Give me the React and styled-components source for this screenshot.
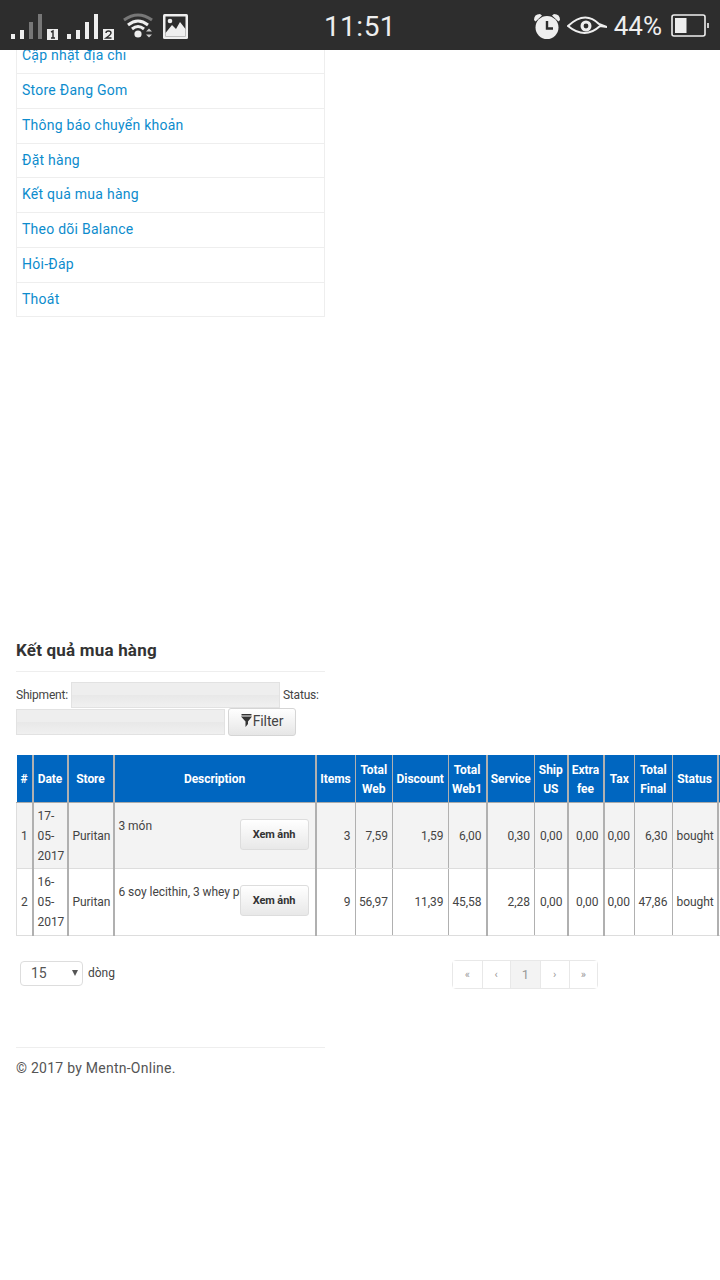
import React from 'react'
import styled, { createGlobalStyle } from 'styled-components'

const GlobalStyle = createGlobalStyle`
  html, body {
    margin: 0;
    padding: 0;
    background: #fff;
  }
  body {
    font-family: Roboto, "Liberation Sans", sans-serif;
    color: #333;
    overflow-x: hidden;
  }
`

const menuItems = [
  'Cập nhật địa chỉ',
  'Store Đang Gom',
  'Thông báo chuyển khoản',
  'Đặt hàng',
  'Kết quả mua hàng',
  'Theo dõi Balance',
  'Hỏi-Đáp',
  'Thoát',
]

const columns = [
  { title: '#', width: 16 },
  { title: 'Date', width: 35, thick: true },
  { title: 'Store', width: 46, thick: true },
  { title: 'Description', width: 202, thick: true },
  { title: 'Items', width: 39.5, thick: true },
  { title: 'Total Web', width: 37.5 },
  { title: 'Discount', width: 55.5 },
  { title: 'Total Web1', width: 38.5 },
  { title: 'Service', width: 48, thick: true },
  { title: 'Ship US', width: 33 },
  { title: 'Extra fee', width: 36, thick: true },
  { title: 'Tax', width: 31, thick: true },
  { title: 'Total Final', width: 37.5 },
  { title: 'Status', width: 45.5 },
  { title: '', width: 40, thick: true },
]

const rows = [
  { id: 1, date: '17-05-2017', store: 'Puritan', desc: '3 món', items: '3', web: '7,59', discount: '1,59', web1: '6,00', service: '0,30', ship: '0,00', extra: '0,00', tax: '0,00', final: '6,30', status: 'bought' },
  { id: 2, date: '16-05-2017', store: 'Puritan', desc: '6 soy lecithin, 3 whey protein', items: '9', web: '56,97', discount: '11,39', web1: '45,58', service: '2,28', ship: '0,00', extra: '0,00', tax: '0,00', final: '47,86', status: 'bought' },
]

const StatusBar = styled.div`
  position: absolute;
  top: 0;
  left: 0;
  right: 0;
  z-index: 5;
  height: 50px;
  background: #2d2d2d;
  color: #eee;
  display: grid;
  grid-template-columns: 1fr auto 1fr;
  align-items: center;
`

const StatusLeft = styled.div`
  display: flex;
  align-items: center;
  padding-left: 10px;
`

const StatusRight = styled.div`
  display: flex;
  align-items: center;
  justify-content: flex-end;
  padding-right: 11px;
`

const Clock = styled.div`
  font-size: 28px;
  letter-spacing: 0.5px;
  line-height: 50px;
  padding-top: 2px;
`

const Percent = styled.span`
  font-size: 26px;
  line-height: 50px;
  margin: 0 9px 0 7px;
`

const Icon = styled.svg`
  display: block;
  flex: none;
  margin-right: ${(p) => p.$mr || 0}px;
`

const Page = styled.div`
  position: relative;
  width: 720px;
  height: 1280px;
  overflow: hidden;
  padding-top: 39.3px;
  box-sizing: border-box;
`

const Menu = styled.ul`
  list-style: none;
  margin: 0 0 0 16px;
  padding: 0;
  width: 309px;
  box-sizing: border-box;
  border-left: 1px solid #eee;
  border-right: 1px solid #eee;
`

const MenuItem = styled.li`
  height: 34.75px;
  box-sizing: border-box;
  border-bottom: 1px solid #eee;
  padding-left: 5px;
  line-height: 33px;
  font-size: 14px;
  letter-spacing: 0.25px;
  color: #0d8ccd;
`

const Section = styled.section`
  margin: 319.7px 0 0 16px;
  width: 309px;
`

const Heading = styled.h2`
  margin: 0;
  height: 34px;
  border-bottom: 1px solid #eee;
  font-size: 17px;
  line-height: 26px;
  font-weight: 700;
  letter-spacing: 0.2px;
  color: #333;
`

const FilterForm = styled.div`
  margin-top: 10px;
  font-size: 12px;
  letter-spacing: -0.2px;
  line-height: 26px;
  color: #444;
  height: 55px;
`

const FakeSelect = styled.span`
  display: inline-block;
  vertical-align: top;
  width: 209px;
  height: 26px;
  box-sizing: border-box;
  border: 1px solid #e2e2e2;
  background: linear-gradient(#eeeeee 50%, #e8e8e8 50%, #f0f0f0);
  margin: ${(p) => p.$first ? '0 3px' : '1px 3px 0 0'};
`

const FilterButton = styled.button`
  display: inline-flex;
  align-items: center;
  justify-content: center;
  vertical-align: top;
  width: 68px;
  height: 28px;
  padding: 0 0 2px;
  border: 1px solid #d5d5d5;
  border-radius: 3px;
  background: linear-gradient(#fff, #e6e6e6);
  font-family: inherit;
  font-size: 14px;
  letter-spacing: -0.1px;
  color: #444;
`

const TableWrap = styled.div`
  margin: 18px 0 0 16px;
  width: 704px;
  overflow: hidden;
`

const Table = styled.table`
  table-layout: fixed;
  border-collapse: collapse;
  width: ${(p) => p.$width}px;
  font-size: 12px;
  letter-spacing: -0.05px;
`

const Th = styled.th`
  height: 44px;
  padding: 3px 2px 0;
  background: #0066c0;
  color: #fff;
  font-weight: 700;
  line-height: 19px;
  text-align: center;
  border-left: ${(p) => p.$thick ? 2 : 1}px solid #b0b0b0;
  border-bottom: 1px solid #aaa;
  &:first-child {
    border-left: none;
  }
`

const Tr = styled.tr`
  background: ${(p) => p.$shaded ? '#f3f3f3' : '#fff'};
`

const Td = styled.td`
  padding: 0 ${(p) => p.$right ? 4 : 3}px 0 ${(p) => p.$right ? 2 : 4}px;
  height: 65.5px;
  line-height: 20px;
  color: #444;
  text-align: ${(p) => p.$right ? 'right' : 'left'};
  border-left: ${(p) => p.$thick ? 2 : 1}px solid #b0b0b0;
  border-bottom: 1px solid #ddd;
  &:first-child {
    border-left: 1px solid #ddd;
  }
`

const DescCell = styled(Td)`
  position: relative;
  overflow: hidden;
  white-space: nowrap;
`

const DescText = styled.span`
  display: block;
  padding-bottom: 20px;
`

const ViewButton = styled.button`
  position: absolute;
  top: 16px;
  right: 6px;
  width: 69px;
  height: 31px;
  padding: 0;
  border: 1px solid #ddd;
  border-radius: 3px;
  background: linear-gradient(#fff, #e8e8e8);
  font-family: Roboto, sans-serif;
  font-size: 11px;
  letter-spacing: -0.1px;
  font-weight: 700;
  color: #333;
`

const Controls = styled.div`
  display: flex;
  justify-content: space-between;
  align-items: flex-start;
  margin: 24px 122px 0 20px;
`

const PageSize = styled.div`
  display: flex;
  align-items: center;
  gap: 5px;
  padding-top: 1px;
  font-size: 12px;
  color: #444;
`

const SizeBox = styled.div`
  width: 63px;
  height: 25px;
  box-sizing: border-box;
  border: 1px solid #ddd;
  border-radius: 4px;
  display: flex;
  align-items: center;
  justify-content: space-between;
  padding: 0 4px 0 10px;
  font-size: 14px;
  color: #555;
`

const Caret = styled.span`
  width: 0;
  height: 0;
  border-left: 3px solid transparent;
  border-right: 3px solid transparent;
  border-top: 6px solid #555;
`

const Pager = styled.div`
  display: flex;
  height: 29px;
  box-sizing: border-box;
  border: 1px solid #e8e8e8;
  border-radius: 4px;
`

const PageCell = styled.span`
  width: ${(p) => p.$active ? 30 : 28.5}px;
  display: flex;
  align-items: center;
  justify-content: center;
  box-sizing: border-box;
  border-left: ${(p) => p.$first ? 'none' : '1px solid #e8e8e8'};
  background: ${(p) => p.$active ? '#f3f3f3' : '#fff'};
  color: #999;
  font-size: ${(p) => p.$active ? 13 : 11}px;
  font-weight: 400;
`

const Footer = styled.footer`
  margin: 58px 0 0 16px;
  width: 309px;
  border-top: 1px solid #eee;
  padding-top: 10px;
  font-size: 14px;
  line-height: 20px;
  letter-spacing: 0.25px;
  color: #555;
`

const Signal = ({ tag, dim, gap }) => (
  <Icon width="48" height="28" viewBox="0 0 48 28" $mr={gap}>
    <rect x="1" y="22" width="4" height="5" fill="#eee" />
    <rect x="10" y="18" width="4" height="9" fill="#eee" />
    <rect x="19" y="10" width="4" height="17" fill={dim ? '#777' : '#eee'} />
    <rect x="28" y="2" width="4" height="25" fill={dim ? '#777' : '#eee'} />
    <rect x="37" y="17" width="11" height="11" fill="#eee" />
    {tag === 1
      ? <path d="M41 20 L43 19 V26 M41 26 H45" stroke="#2d2d2d" strokeWidth="1.4" fill="none" />
      : <path d="M40 21 Q40 19 42.5 19 Q45 19 45 21 Q45 22.5 40 26 H45.5" stroke="#2d2d2d" strokeWidth="1.4" fill="none" />}
  </Icon>
)

const Wifi = () => (
  <Icon width="31" height="26" viewBox="0 0 31 26" $mr={9}>
    <path d="M1 7 Q15 -3 29 7" stroke="#777" strokeWidth="3" fill="none" />
    <path d="M5 12 Q15 4 25 12" stroke="#eee" strokeWidth="3" fill="none" />
    <path d="M9 16 Q15 11 21 16" stroke="#eee" strokeWidth="3" fill="none" />
    <circle cx="15" cy="21" r="3.6" fill="#eee" />
    <path d="M23 18.5 L26 15.5 L29 18.5 Z M23 21.5 L26 24.5 L29 21.5 Z" fill="#ccc" />
  </Icon>
)

const Picture = () => (
  <Icon width="25" height="25" viewBox="0 0 25 25">
    <rect x="0" y="0" width="25" height="25" rx="1.5" fill="#eee" />
    <rect x="2.5" y="2.5" width="20" height="20" fill="#2d2d2d" />
    <path d="M2.5 19 L9 11 L13 15 L17 8 L22.5 15 V22.5 H2.5 Z" fill="#eee" />
    <circle cx="7" cy="7" r="2.3" fill="#eee" />
  </Icon>
)

const Alarm = () => (
  <Icon width="28" height="26" viewBox="0 0 28 26" $mr={6}>
    <circle cx="14" cy="14.5" r="11.5" fill="#eee" />
    <path d="M1 7 Q1 1 7 1 L9 2.5 L2.5 8.5 Z M27 7 Q27 1 21 1 L19 2.5 L25.5 8.5 Z" fill="#eee" />
    <path d="M14 8 V15.5 H20" stroke="#2d2d2d" strokeWidth="2.4" fill="none" />
  </Icon>
)

const Eye = () => (
  <Icon width="40" height="20" viewBox="0 0 40 20">
    <path d="M1 10 Q18 -6 32 8 L40 11 L33 10 Q18 24 1 10 Z" fill="none" stroke="#eee" strokeWidth="2" />
    <circle cx="19" cy="10" r="5.5" fill="#eee" />
    <circle cx="19" cy="10" r="2.4" fill="#2d2d2d" />
  </Icon>
)

const Battery = () => (
  <Icon width="38" height="24" viewBox="0 0 38 24">
    <rect x="1" y="1" width="33" height="21" rx="2" fill="none" stroke="#eee" strokeWidth="1.6" />
    <rect x="4" y="4" width="11.5" height="15" fill="#eee" />
    <rect x="36" y="9" width="2" height="5" fill="#ccc" />
  </Icon>
)

const Funnel = () => (
  <Icon width="11" height="13" viewBox="0 0 11 13" $mr={1}>
    <rect x="0.5" y="0" width="10" height="1.5" fill="#333" />
    <path d="M0 2.5 H11 L7 7.5 V10 L4.5 13 V7.5 Z" fill="#333" />
  </Icon>
)

const App = () => {
  const tableWidth = columns.reduce((sum, c) => sum + c.width, 0)
  const thick = (i) => columns[i].thick

  return (
    <Page>
      <GlobalStyle />
      <StatusBar>
        <StatusLeft>
          <Signal tag={1} dim gap={8} />
          <Signal tag={2} gap={9} />
          <Wifi />
          <Picture />
        </StatusLeft>
        <Clock>11:51</Clock>
        <StatusRight>
          <Alarm />
          <Eye />
          <Percent>44%</Percent>
          <Battery />
        </StatusRight>
      </StatusBar>

      <Menu>
        {menuItems.map((item) => (
          <MenuItem key={item}>{item}</MenuItem>
        ))}
      </Menu>

      <Section>
        <Heading>Kết quả mua hàng</Heading>
        <FilterForm>
          Shipment:<FakeSelect $first />Status:
          <FakeSelect />
          <FilterButton><Funnel />Filter</FilterButton>
        </FilterForm>
      </Section>

      <TableWrap>
        <Table $width={tableWidth}>
          <colgroup>
            {columns.map((c, i) => (
              <col key={i} style={{ width: c.width }} />
            ))}
          </colgroup>
          <thead>
            <tr>
              {columns.map((c, i) => (
                <Th key={i} $thick={c.thick}>{c.title}</Th>
              ))}
            </tr>
          </thead>
          <tbody>
            {rows.map((r) => (
              <Tr key={r.id} $shaded={r.id === 1}>
                <Td>{r.id}</Td>
                <Td $thick={thick(1)}>{r.date}</Td>
                <Td $thick={thick(2)}>{r.store}</Td>
                <DescCell $thick={thick(3)}>
                  <DescText>{r.desc}</DescText>
                  <ViewButton>Xem ảnh</ViewButton>
                </DescCell>
                <Td $right $thick={thick(4)}>{r.items}</Td>
                <Td $right>{r.web}</Td>
                <Td $right>{r.discount}</Td>
                <Td $right>{r.web1}</Td>
                <Td $right $thick={thick(8)}>{r.service}</Td>
                <Td $right>{r.ship}</Td>
                <Td $right $thick={thick(10)}>{r.extra}</Td>
                <Td $right $thick={thick(11)}>{r.tax}</Td>
                <Td $right>{r.final}</Td>
                <Td>{r.status}</Td>
                <Td $thick={thick(14)} />
              </Tr>
            ))}
          </tbody>
        </Table>
      </TableWrap>

      <Controls>
        <PageSize>
          <SizeBox>15<Caret /></SizeBox>
          dòng
        </PageSize>
        <Pager>
          <PageCell $first>«</PageCell>
          <PageCell>‹</PageCell>
          <PageCell $active>1</PageCell>
          <PageCell>›</PageCell>
          <PageCell>»</PageCell>
        </Pager>
      </Controls>

      <Footer>© 2017 by Mentn-Online.</Footer>
    </Page>
  )
}

export default App
